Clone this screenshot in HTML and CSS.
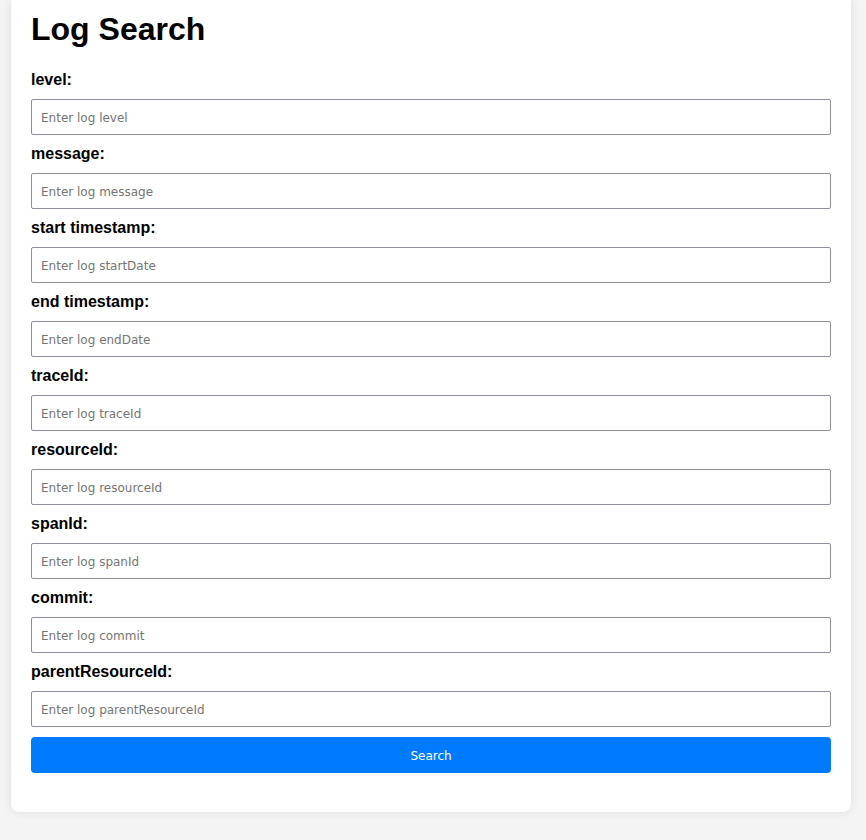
FILE: index.html
```html
<!DOCTYPE html>
<html lang="en">
<head>
<meta charset="utf-8">
<title>Log Search</title>
<link rel="stylesheet" href="styles.css">
</head>
<body>
<div class="card">
  <h1 class="title">Log Search</h1>
  <form class="form">
    <label class="label" for="level">level:</label>
    <input class="field" id="level" type="text" placeholder="Enter log level">
    <label class="label" for="message">message:</label>
    <input class="field" id="message" type="text" placeholder="Enter log message">
    <label class="label" for="start">start timestamp:</label>
    <input class="field" id="start" type="text" placeholder="Enter log startDate">
    <label class="label" for="end">end timestamp:</label>
    <input class="field" id="end" type="text" placeholder="Enter log endDate">
    <label class="label" for="traceId">traceId:</label>
    <input class="field" id="traceId" type="text" placeholder="Enter log traceId">
    <label class="label" for="resourceId">resourceId:</label>
    <input class="field" id="resourceId" type="text" placeholder="Enter log resourceId">
    <label class="label" for="spanId">spanId:</label>
    <input class="field" id="spanId" type="text" placeholder="Enter log spanId">
    <label class="label" for="commit">commit:</label>
    <input class="field" id="commit" type="text" placeholder="Enter log commit">
    <label class="label" for="parentResourceId">parentResourceId:</label>
    <input class="field" id="parentResourceId" type="text" placeholder="Enter log parentResourceId">
    <button class="btn" type="button">Search</button>
  </form>
</div>
</body>
</html>
```

FILE: styles.css
```css
html, body {
  margin: 0;
  padding: 0;
}
body {
  background: #f4f4f4;
  font-family: "Liberation Sans", Arial, sans-serif;
  color: #000;
  height: 840px;
  overflow: hidden;
}
.card {
  width: 800px;
  margin-left: 11px;
  padding: 11px 20px 39px 20px;
  background: #fff;
  border-radius: 0 0 8px 8px;
  box-shadow: 0 0 10px rgba(0, 0, 0, 0.1);
}
.title {
  font-size: 32px;
  font-weight: bold;
  line-height: 37px;
  margin: 0 0 23px 0;
}
.form {
  display: flex;
  flex-direction: column;
}
.label {
  display: block;
  font-size: 16px;
  font-weight: bold;
  line-height: 18px;
  margin-bottom: 10px;
}
.field {
  box-sizing: border-box;
  width: 800px;
  height: 36px;
  margin: 0 0 10px 0;
  padding: 2px 9px 0 9px;
  border: 1px solid #8f8f9d;
  border-radius: 2px;
  font-family: "DejaVu Sans", Verdana, sans-serif;
  font-size: 12px;
  background: #fff;
  outline: none;
}
.field::placeholder {
  color: #757575;
}
.btn {
  box-sizing: border-box;
  width: 800px;
  height: 36px;
  border: none;
  border-radius: 4px;
  background: #007bff;
  color: #fff;
  font-family: "DejaVu Sans", Verdana, sans-serif;
  font-size: 12px;
  padding: 2px 0 0 0;
}
```
